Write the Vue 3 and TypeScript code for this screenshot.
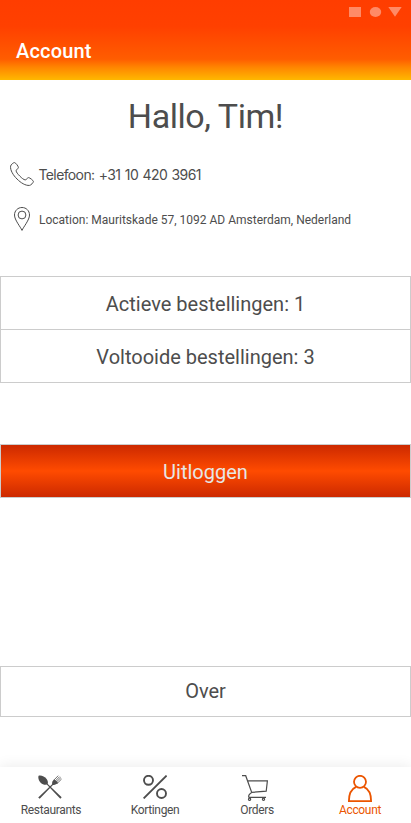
<script setup lang="ts">
interface Tab {
  id: 'restaurants' | 'deals' | 'orders' | 'account'
  label: string
}

const tabs: Tab[] = [
  { id: 'restaurants', label: 'Restaurants' },
  { id: 'deals', label: 'Kortingen' },
  { id: 'orders', label: 'Orders' },
  { id: 'account', label: 'Account' },
]
const activeTab: Tab['id'] = 'account'

const stats = [
  { label: 'Actieve bestellingen', count: 1 },
  { label: 'Voltooide bestellingen', count: 3 },
]
</script>

<template>
  <div class="screen">
    <header class="app-bar">
      <svg class="system-icons" width="53" height="10" viewBox="0 0 53 10" aria-hidden="true">
        <path d="M0 0H12V10H0Z" />
        <ellipse cx="26.5" cy="5" rx="5.7" ry="5" />
        <path d="M39.3 0H52.7L46 9.7Z" />
      </svg>
      <h1 class="title">Account</h1>
    </header>

    <main class="content">
      <h2 class="greeting">Hallo, Tim!</h2>

      <div class="contact phone">
        <svg width="24" height="24" viewBox="0 0 24 24" aria-hidden="true">
          <path d="M4.6.6C3.5.4.9 2.6.6 4.1C.1 8.3 3.2 13.200 7 17C10.800 20.800 15.500 23.800 19.500 23.400C21 23.200 23.300 20.800 23.400 19.400C23.300 18.500 19.800 15.600 18.500 15.600C17.400 15.700 16.300 18 15.200 17.900C13.800 17.800 11.700 16 9.800 14.100C7.800 12.100 6.200 10.100 6.100 8.800C6.100 7.700 8.300 6.600 8.400 5.500C8.400 4.300 5.700.8 4.600.6Z" />
        </svg>
        <span>Telefoon: +31 10 420 3961</span>
      </div>
      <div class="contact location">
        <svg width="24" height="24" viewBox="0 0 24 24" aria-hidden="true">
          <path d="M12 23.400C10.500 19.800 4.500 13 4.500 8C4.500 3.700 7.800.5 12 .5S19.500 3.700 19.500 8C19.500 13 13.500 19.800 12 23.400Z" />
          <circle cx="12" cy="8" r="3.900" />
        </svg>
        <span>Location: Mauritskade 57, 1092 AD Amsterdam, Nederland</span>
      </div>

      <ul class="stats">
        <li v-for="stat in stats" :key="stat.label">{{ stat.label }}: {{ stat.count }}</li>
      </ul>

      <button class="logout" type="button">Uitloggen</button>
      <button class="about" type="button">Over</button>
    </main>

    <nav class="tabs">
      <a v-for="tab in tabs" :key="tab.id" class="tab" :class="[tab.id, { active: tab.id === activeTab }]">
        <svg v-if="tab.id === 'restaurants'" width="24" height="24" viewBox="0 0 24 24" aria-hidden="true">
          <path class="solid" d="M.6.8C3 .1 6.700 1.400 8.600 3.900C10.100 5.900 10.200 8 9.400 9.300C7.500 10.300 4.800 9.700 2.700 7.700C.6 5.600-.1 2.700.6.8Z" />
          <path class="solid" d="M14.300 9.700C13.700 7.600 14.300 6 16 4.500L18.500 6L20.100 8.100C18.200 9.700 16.300 10.300 14.300 9.700Z" />
          <path class="solid" d="M8.300 9L9 8.300L23.700 22.300L22.300 23.700ZM14.900 8.400L15.700 9.200L1.700 23.800L.2 22.400Z" />
          <path class="tines" d="M15.800 5.200L20.200.7M17.100 6.200L21.700 1.600M18.200 7.200L22.900 2.600M19.200 8.400L23.600 4" />
        </svg>
        <svg v-else-if="tab.id === 'deals'" width="24" height="24" viewBox="0 0 24 24" aria-hidden="true">
          <g class="percent">
            <path d="M.6 23.400L23.600.6" />
            <circle cx="5.500" cy="5.300" r="4.500" />
            <circle cx="18.500" cy="18.500" r="4.500" />
          </g>
        </svg>
        <svg v-else-if="tab.id === 'orders'" width="26" height="26" viewBox="0 0 26 26" aria-hidden="true">
          <g class="cart">
            <path d="M0 .7H3.700L9.700 17.400L24.200 16.200L25.400 5.800H5.500" />
            <path d="M9.700 17.400C7.400 18.800 6 21 7 22.300H24" />
            <circle cx="7.600" cy="24.300" r="1.100" />
            <circle cx="21.500" cy="24.300" r="1.100" />
          </g>
        </svg>
        <svg v-else width="24" height="27" viewBox="0 0 24 27" aria-hidden="true">
          <g class="person">
            <circle cx="12" cy="6.800" r="6" />
            <path d="M8.100 11.900C3.500 14 .9 19.500.9 26.100H23.100C23.100 19.500 20.500 14 15.900 11.900" />
          </g>
        </svg>
        <span>{{ tab.label }}</span>
      </a>
    </nav>
  </div>
</template>

<style>
body {
  margin: 0;
  background: #fff;
}
</style>

<style scoped>
.screen {
  display: flex;
  flex-direction: column;
  height: 823px;
  overflow: hidden;
  color: #4d4d4d;
  font-family: Roboto, sans-serif;
}

.app-bar {
  display: flex;
  flex-direction: column;
  box-sizing: border-box;
  height: 80px;
  padding: 7px 9px 0 16px;
  background: linear-gradient(#ff3d00 0%, #ff4000 33%, #ff5d00 74%, #ff8500 84%, #ffb800 100%);
}

.system-icons {
  align-self: flex-end;
  fill: #ff8a66;
}

.title {
  margin: 22px 0 0;
  color: #fff;
  font-size: 20px;
  font-weight: 500;
  letter-spacing: 0.18px;
  line-height: 24px;
}

.content {
  display: flex;
  flex: 1;
  flex-direction: column;
}

.greeting {
  margin: 16px 0 0;
  font-size: 34px;
  font-weight: 400;
  letter-spacing: -0.45px;
  line-height: 41px;
  text-align: center;
}

.contact {
  display: flex;
  align-items: center;
  gap: 5px;
  height: 24px;
  padding-left: 10px;
  white-space: nowrap;
}

.contact svg {
  fill: none;
  stroke: #4d4d4d;
  stroke-width: 1;
}

.phone {
  gap: 4.5px;
  margin-top: 25px;
  font-family: Inter, Roboto, sans-serif;
  font-size: 14px;
  letter-spacing: -0.62px;
  word-spacing: 1.1px;
}

.phone span {
  padding-top: 1px;
  line-height: 16px;
}

.location {
  margin-top: 21px;
  font-size: 12px;
}

.location span {
  padding-top: 2px;
}

.stats {
  margin: 45px 0 0;
  padding: 0;
  border: 1px solid #ccc;
  list-style: none;
}

.stats li {
  height: 52px;
  font-size: 20px;
  line-height: 54px;
  text-align: center;
}

.stats li + li {
  border-top: 1px solid #ccc;
}

.logout,
.about {
  box-sizing: border-box;
  width: 100%;
  padding: 0;
  border: 1px solid #ccc;
  border-radius: 0;
  font: 400 20px/24px Roboto, sans-serif;
}

.logout {
  height: 54px;
  margin-top: 61px;
  padding-top: 2px;
  background: linear-gradient(#cc2900, #ff4b00 50%, #cc2900);
  color: #e6e6e6;
}

.about {
  height: 51px;
  margin-top: 168px;
  padding-bottom: 1px;
  background: #fff;
  color: #4d4d4d;
}

.tabs {
  display: grid;
  grid-template-columns: repeat(4, 103px);
  justify-content: center;
  height: 56px;
  background: #fff;
  box-shadow: 0 0 14px rgba(0, 0, 0, 0.09);
}

.tab {
  display: flex;
  flex-direction: column;
  align-items: center;
  justify-content: space-between;
  box-sizing: border-box;
  height: 50px;
  padding-top: 8px;
  font-size: 12px;
  letter-spacing: -0.34px;
  line-height: 14px;
}

.tab svg {
  fill: none;
  stroke: #4d4d4d;
}

.restaurants svg {
  margin-right: 2px;
}

.deals {
  padding-left: 2px;
}

.orders svg {
  margin-right: 4px;
}

.tab .solid {
  fill: #4d4d4d;
  stroke: none;
}

.tines {
  stroke-width: 0.8;
}

.percent {
  stroke-width: 1.9;
}

.cart {
  stroke-width: 1.2;
}

.tab.active {
  color: #eb5500;
}

.active svg {
  stroke: #eb5500;
}

.person {
  stroke-width: 1.8;
}
</style>
